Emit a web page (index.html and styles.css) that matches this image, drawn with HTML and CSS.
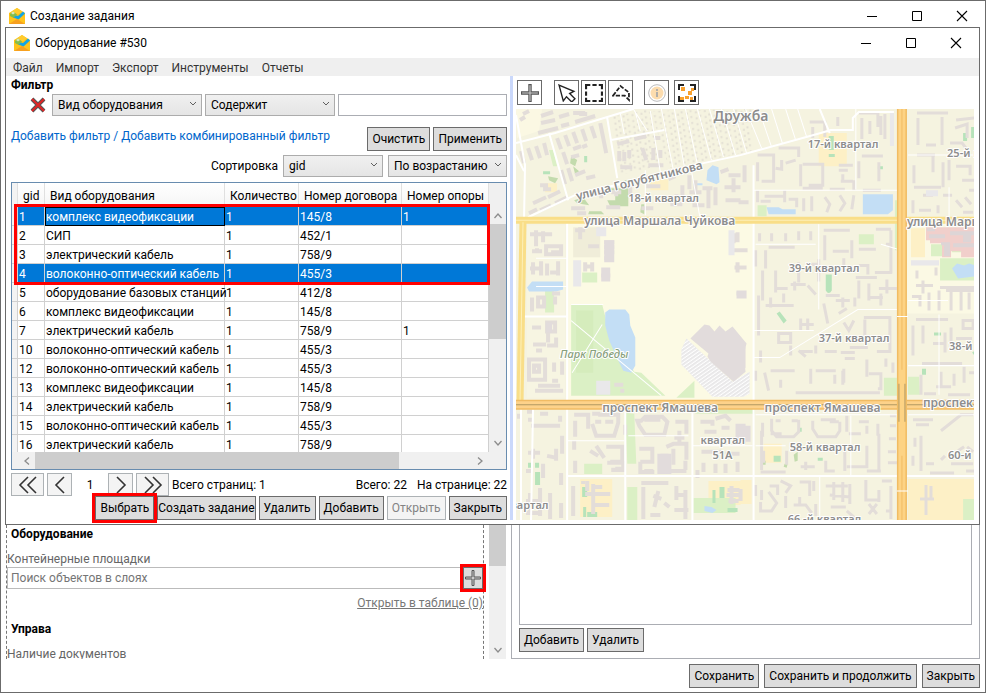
FILE: index.html
```html
<!DOCTYPE html>
<html lang="ru">
<head>
    <meta charset="UTF-8">
    <title>Создание задания</title>
    <link rel="stylesheet" href="styles.css">
</head>
<body>
    <svg width="0" height="0" class="defs" aria-hidden="true">
        <symbol id="logo" viewBox="0 0 16 16">
            <path d="M0 5 8 0l8 5v11H0z" fill="#fdc010"/>
            <path d="M3 3.500 8 0l5 3.500-4 3z" fill="#ffcb2e"/>
            <path d="M1 6l3-2.500 4 3L4.500 10 1 8z" fill="#84bd4c"/>
            <path d="M2 5l2-1.500L6 5 4 6.500z" fill="#d7e9bd"/>
            <path d="M0 8l8 4 8-5v9H0z" fill="#ffc41c"/>
            <path d="M4.500 9.500 7 7.500l2 .5 5-4.500 2 2L9.500 11.500z" fill="#12a5e4"/>
            <path d="M0 16l8-5 8 5z" fill="#f7a020"/>
        </symbol>
        <symbol id="chevron" viewBox="0 0 8 8"><path d="M1 2l3 3 3-3" fill="none" stroke="#606060"/></symbol>
        <symbol id="arrow" viewBox="0 0 10 10"><path d="M1.500 7 5 3l3.500 4" fill="none" stroke="#8c8c8c" stroke-width="1.300"/></symbol>
        <symbol id="plus" viewBox="0 0 16 16"><path d="M7 .5h2V7h6.500v2H9v6.500H7V9H.5V7H7z" fill="#ccc" stroke="#555" stroke-width="1"/></symbol>
        <symbol id="min" viewBox="0 0 12 12"><path d="M1 6.500h10" stroke="#000"/></symbol>
        <symbol id="max" viewBox="0 0 12 12"><path d="M1.500 1.500h9v9h-9z" fill="none" stroke="#000"/></symbol>
        <symbol id="close" viewBox="0 0 12 12"><path d="M1 1l10 10M11 1 1 11" stroke="#000" stroke-width="1.100"/></symbol>
    </svg>

    <div class="task-window">
        <header class="titlebar task-title">
            <svg class="logo"><use href="#logo"/></svg>
            <span>Создание задания</span>
            <div class="window-buttons">
                <button aria-label="Свернуть"><svg><use href="#min"/></svg></button>
                <button aria-label="Развернуть"><svg><use href="#max"/></svg></button>
                <button aria-label="Закрыть окно"><svg><use href="#close"/></svg></button>
            </div>
        </header>

        <div class="equipment-window">
            <header class="titlebar">
                <svg class="logo"><use href="#logo"/></svg>
                <span>Оборудование #530</span>
                <div class="window-buttons">
                    <button aria-label="Свернуть"><svg><use href="#min"/></svg></button>
                    <button aria-label="Развернуть"><svg><use href="#max"/></svg></button>
                    <button aria-label="Закрыть окно"><svg><use href="#close"/></svg></button>
                </div>
            </header>
            <nav class="menu">
                <a href="#">Файл</a>
                <a href="#">Импорт</a>
                <a href="#">Экспорт</a>
                <a href="#">Инструменты</a>
                <a href="#">Отчеты</a>
            </nav>

            <div class="panes">
                <section class="list-pane">
                    <h2 class="filter-title">Фильтр</h2>
                    <div class="filter-row">
                        <button class="remove" aria-label="Удалить фильтр">
                            <svg viewBox="0 0 16 16"><path d="M2 2l12 12M14 2 2 14" stroke="#555" stroke-width="4"/><path d="M2 2l12 12M14 2 2 14" stroke="#e02424" stroke-width="2"/></svg>
                        </button>
                        <span class="select field"><select aria-label="Поле"><option>Вид оборудования</option></select><svg><use href="#chevron"/></svg></span>
                        <span class="select cond"><select aria-label="Условие"><option>Содержит</option></select><svg><use href="#chevron"/></svg></span>
                        <input type="text" class="filter-value" aria-label="Значение">
                    </div>
                    <div class="filter-actions">
                        <div class="links"><a href="#">Добавить фильтр</a> <span>/</span> <a href="#">Добавить комбинированный фильтр</a></div>
                        <button class="btn">Очистить</button>
                        <button class="btn">Применить</button>
                    </div>
                    <div class="sort-row">
                        <label for="sort">Сортировка</label>
                        <span class="select sort-field"><select id="sort"><option>gid</option></select><svg><use href="#chevron"/></svg></span>
                        <span class="select sort-dir"><select aria-label="Порядок"><option>По возрастанию</option></select><svg><use href="#chevron"/></svg></span>
                    </div>

                    <div class="grid-box">
                        <div class="grid-body">
                            <table>
                                <colgroup><col class="c-mark"><col class="c-gid"><col><col class="c-count"><col class="c-contract"><col class="c-pole"></colgroup>
                                <thead>
                                    <tr><th></th><th>gid</th><th>Вид оборудования</th><th>Количество</th><th>Номер договора</th><th>Номер опоры</th></tr>
                                </thead>
                                <tbody>
                                    <tr class="selected"><td></td><td>1</td><td class="current">комплекс видеофиксации</td><td>1</td><td>145/8</td><td>1</td></tr>
                                    <tr><td></td><td>2</td><td>СИП</td><td>1</td><td>452/1</td><td></td></tr>
                                    <tr><td></td><td>3</td><td>электрический кабель</td><td>1</td><td>758/9</td><td></td></tr>
                                    <tr class="selected"><td></td><td>4</td><td>волоконно-оптический кабель</td><td>1</td><td>455/3</td><td></td></tr>
                                    <tr><td></td><td>5</td><td>оборудование базовых станций</td><td>1</td><td>412/8</td><td></td></tr>
                                    <tr><td></td><td>6</td><td>комплекс видеофиксации</td><td>1</td><td>145/8</td><td></td></tr>
                                    <tr><td></td><td>7</td><td>электрический кабель</td><td>1</td><td>758/9</td><td>1</td></tr>
                                    <tr><td></td><td>10</td><td>волоконно-оптический кабель</td><td>1</td><td>455/3</td><td></td></tr>
                                    <tr><td></td><td>12</td><td>волоконно-оптический кабель</td><td>1</td><td>455/3</td><td></td></tr>
                                    <tr><td></td><td>13</td><td>комплекс видеофиксации</td><td>1</td><td>145/8</td><td></td></tr>
                                    <tr><td></td><td>14</td><td>электрический кабель</td><td>1</td><td>758/9</td><td></td></tr>
                                    <tr><td></td><td>15</td><td>волоконно-оптический кабель</td><td>1</td><td>455/3</td><td></td></tr>
                                    <tr><td></td><td>16</td><td>электрический кабель</td><td>1</td><td>758/9</td><td></td></tr>
                                </tbody>
                            </table>
                            <div class="vscroll grid-vscroll">
                                <svg><use href="#arrow"/></svg>
                                <i class="thumb"></i>
                                <svg class="down"><use href="#arrow"/></svg>
                            </div>
                        </div>
                        <div class="hscroll">
                            <svg class="left"><use href="#arrow"/></svg>
                            <i class="thumb"></i>
                            <svg class="right"><use href="#arrow"/></svg>
                        </div>
                        <div class="mark"></div>
                    </div>

                    <div class="pager">
                        <button class="wide" aria-label="Первая"><svg viewBox="0 0 20 18"><path d="M10 1 2 9l8 8M18 1l-8 8 8 8"/></svg></button>
                        <button aria-label="Назад"><svg viewBox="0 0 20 18"><path d="M14 1 6 9l8 8"/></svg></button>
                        <span class="page">1</span>
                        <button aria-label="Вперед"><svg viewBox="0 0 20 18"><path d="M6 1l8 8-8 8"/></svg></button>
                        <button class="wide" aria-label="Последняя"><svg viewBox="0 0 20 18"><path d="M2 1l8 8-8 8M10 1l8 8-8 8"/></svg></button>
                        <span>Всего страниц: 1</span>
                        <span class="total">Всего: 22</span>
                        <span class="on-page">На странице: 22</span>
                    </div>
                    <div class="list-buttons">
                        <button class="btn choose">Выбрать</button>
                        <button class="btn create">Создать задание</button>
                        <button class="btn">Удалить</button>
                        <button class="btn">Добавить</button>
                        <button class="btn" disabled>Открыть</button>
                        <button class="btn">Закрыть</button>
                    </div>
                </section>

                <div class="splitter"></div>

                <section class="map-pane">
                    <div class="map-tools">
                        <button aria-label="Добавить объект"><svg><use href="#plus"/></svg></button>
                        <button class="gap-l" aria-label="Курсор"><svg viewBox="0 0 17 17"><path d="M1 1l14 6-4 2 5 5-3 3-5-5-3 4z" fill="#fff" stroke="#222" stroke-width="1.300"/></svg></button>
                        <button aria-label="Выделить рамкой"><svg viewBox="0 0 17 17"><path d="M1 5V1h4M7 1h4M13 1h3v4M16 7v4M16 13v3h-3M11 16H7M5 16H1v-3M1 11V7" fill="none" stroke="#222" stroke-width="2"/></svg></button>
                        <button aria-label="Выделить областью"><svg viewBox="0 0 17 17"><path d="M1 11 8 2l8 6v7l-4-4z" fill="none" stroke="#222" stroke-width="1.700" stroke-dasharray="4 1.500"/></svg></button>
                        <button class="gap-m" aria-label="Информация"><svg viewBox="0 0 18 18"><circle cx="9" cy="9" r="8.300" fill="#fff" stroke="#bbb"/><circle cx="9" cy="9" r="6.500" fill="#fcdcae"/><path d="M9 5v2M9 8v5" stroke="#aaa" stroke-width="1.800"/></svg></button>
                        <button class="gap-s" aria-label="Показать все"><svg viewBox="0 0 18 18"><path d="M1 6V1h5M12 1h5v5M17 12v5h-5M6 17H1v-5" fill="none" stroke="#222" stroke-width="2"/><path d="M3 3h4v4H3zM13 4h3v3h-3zM10 7h4v4h-4zM7 12h4v3H7zM12 13h3v3h-3zM2 13h4v3H2z" fill="#f9a12e"/></svg></button>
                    </div>
                    <svg class="map" viewBox="516 109 458 410" preserveAspectRatio="xMinYMin slice">
                        <defs>
                            <pattern id="hatch" width="3" height="3" patternUnits="userSpaceOnUse" patternTransform="rotate(-35)"><path d="M0 1h3" stroke="#fff"/></pattern>
                            <pattern id="houses" width="9" height="6" patternUnits="userSpaceOnUse" patternTransform="rotate(-8)"><path d="M1 1h2v2H1zM6 3h2v2H6z" fill="#e3dfd4"/></pattern>
                        </defs>
                        <path d="M516 109h458v410H516z" fill="#f5f3e0"/>
                        <!-- пустые кварталы -->
                        <path d="M567 223h186v177H567z" fill="#fcfae4"/>
                        <path d="M527 225h38v172h-38z" fill="#f7f5e2"/>
                        <path d="M573 227h27v30h-27z" fill="#f0edd9"/>
                        <path d="M516 109h26l-3 22-22 7z" fill="#fbf8e3"/>
                        <path d="M906 223h68v90h-68z" fill="#fbf9e4"/>
                        <path class="yellow" d="M650 179h18v11h-18zM818 133h28v33h-28zM910 228h14v29h-14zM580 478h32v38h-32zM708 480h32v24h-32zM763 443h18v19h-18zM907 478h68v42h-68zM740 479h11v24h-11zM545 183h12v9h-12z"/>
                        <path class="grass" d="M571 304h31l8 32 24 35 7 1 24 23h-94zM676 397l18-17v17zM625 412l9 1 2 50h-9zM627 486h10v33h-10zM584 463h18v10h-18zM883 377h13v18h-13zM907 376h11l1 18h-12zM939 258h35v22h-35zM858 234h15v10h-15zM757 205h9v11h-9zM693 497h42v15h-42zM894 200h4v50h-4zM962 498h12v21h-12zM930 244h12v12h-12zM951 242h14v10h-14zM582 272h15v10h-15zM545 290h9v22h-9zM549 150l4 16h4l-4-16zM695 408h59v5h-59z"/>
                        <path d="M576 310h17v62h-17z" fill="#cfe8b4" opacity=".5"/>
                        <path class="wood" d="M607 188h18l3-5-4-3h4v26h-18l-3-6h8v-9zM574 200l9-3 6 8-12-2zM589 211h12l3 3h-16zM640 212l4 2v-10h-3zM548 176l10 2-3 5-6-3zM571 156l6 4-2 6-5-3zM573 166l6 5-4 3zM793 454l4-3v9l-3 1zM784 463h3l-1 4-3-1zM762 460h3v4h-3z"/>
                        <path class="tree" d="M543 171h7v3h-7zM584 156h3v6h-3zM828 136h5v14h-5zM828 154h6v3h-6zM825 274h6v16q-3 5-6 0zM877 166h5v3h-5zM970 127h4v11h-4zM962 133h4v8h-4zM535 471h5v13h-5zM528 462h3v5h-3zM535 462h4v5h-4zM582 486h5v10h-5zM587 511h10v5h-10zM583 506h3v10h-3zM719 486h5v11h-5zM712 489h3v13h-3zM727 507h10v4h-10zM773 455h7v6h-7zM817 457h5v3h-5zM798 427h3v4h-3zM776 313l3-2 7 9-3 3zM921 368h4v6h-4zM933 332h7v3h-7zM971 352l3-2v6z"/>
                        <path d="M925 227h49v30h-14v-6h-10v6h-9v-14h-12v-3h-4z" fill="#f1cfcb"/>
                        <path d="M928 234h16v4h-16zM940 242h9v14h-6v-11h-3zM949 231h25v4h-25zM952 243h22v4h-22zM962 235h8v7h-8zM926 228h8v3h-8z" fill="#ddd5d6"/>
                        <path class="water" d="M605 312l4-3h16l4 5 1 11 5 12v28l-4 7-8-2-6-12-8-18-4-15zM532 281h31v8l-7 2h-27l-2-4zM707 170l5-5 6 2 1 15-3 2-10-4zM693 183h9v2h-9zM862 194h30v16l-5 4h-25zM766 207h12l4 2h13v5h-27zM951 268l5-5 7 2 5-2 6 2v11l-9 1-8 1zM704 505l7 1 5 3-4 3-8-2z"/>

                        <!-- стадион -->
                        <path d="M681 349l5-11 46 43 17-10v22l-6 3h-31l-31-32z" fill="#e9e8e9"/>
                        <path d="M681 349l5-11 46 43 17-10v22l-6 3h-31l-31-32z" fill="url(#hatch)"/>
                        <path d="M690 338l14-14 5 1 5 6 5-6 6 6 7-5 14 17-3 11 2 17-12 10-23-20-3-5 1-3z" fill="#e2dcdc"/>

                        <path d="M650 111l102-2-1 42-82 17zM611 117l38-8 12 56-42 10z" fill="url(#houses)"/>
                        <!-- здания -->
                        <g class="houses-s">
                            <path d="M520 120l5-3M523 114l6-3M541 116l12-4M541 123l14-3M538 133l20-5M559 117l10-3M561 126l8-2M573 113h12M575 122l20-6M579 114h8M521 151l3 12M528 148l4 12M536 146l4 12M544 143l3 12M557 138l4 11M565 135l4 11M573 132l4 11M582 129l4 12M591 126l4 12M563 152l4 12M571 157l8-2M573 149l8-3M582 147l5-2M600 123l6 30M561 170l4 14M568 168l4 13M575 175l10-4M586 178l9-2M533 203l13-6M548 197l12-6M555 203l12-6M540 210l11-5M540 185h8M543 189h8M571 208h14M577 213h9M529 213l8-4"/>
                            <path d="M617 144l12-3M634 139l12-3M654 138h6M619 151v10M624 152v9M629 150v8M620 167h12M648 165h15M653 148v12M660 150v8M642 148l4 12M646 186h14M668 179l7-3M676 172l6-2M682 185v12M689 175v14M695 180v11M670 204h12M692 205h12M689 192h12M676 194v12M702 188h10M708 190v18M715 187v18M724 187h16M720 172l8-3M728 175h12M733 178v14M725 200h15M744 165v17M738 202h10M641 208h12M606 207h14M594 193h12M601 189v9M611 192h10M616 188v8M630 186v11M640 177h8"/>
                            <path d="M530 234h22M536 230v16M543 231v11M532 251h10M551 252h12M537 248v5M546 246h15v8h-15zM533 262v12M541 261v14M530 268h12M547 263v12M558 261v14M550 272h10M575 230h10M580 227v12M588 246h11M585 262v9M592 262v9M584 266h9M604 242h10M604 247h10M604 252h10M604 258h9M601 275h9"/>
                            <path d="M733 233v10M737 232v10M734 267h12M737 262v10M736 293h9M733 250h14"/>
                            <path d="M532 297v14M538 297h6v9h-6zM552 293h8M555 296v8M532 327h9M547 322h8v9h-8zM533 344h13M536 350h6M547 345h11M529 359h16v20h-16zM534 365h5v6h-5zM554 362v9M562 361v13M552 380h6M538 385h22M535 390h28M548 327v15M556 337v6M599 384h10M614 384h9M598 391h12M620 390h4"/>
                            <path d="M527 411h6M530 417v4M540 413h8M560 415v6M519 413v5M531 425h29M562 435v18M556 448v12M528 452h12M533 448v10M526 470h6M543 463v14M561 472v12M530 492v22M540 487v28M550 492v26M561 502v15M526 500h12M526 512h12M547 455l10 2"/>
                            <path d="M574 414h14v14M575 420v16M592 413h8M598 414h20v8l-4 13h-18l-4-12M595 421h6M605 421h8M625 424v10M574 440v9M590 450l8 5M596 445l8 12M606 446h16v15h-12M575 460v12M587 480v10M573 485v30M607 462h16v7h-12M615 468h8"/>
                            <path d="M637 420h4l4-4h17l5 5-3 13h-19l-6-9zM644 419h16M675 421h11v12M679 430v12M674 437h10M639 448h13v13h-12M640 461v10h14M644 470h9M673 448v16M666 446l7-3h13v16M685 460v9M667 470h19M660 455h8M641 482h27M643 486v32M653 495l8 3M658 490l-4 16M664 502l5 4M676 485v14M685 489v29M674 509h14M676 494h10M650 514h10"/>
                            <path d="M715 418l10-3 5 5M700 421h12v4M704 431h12M721 427h8M701 451h20M725 453h14M703 462v9M715 463v9M725 463v9M737 461v10M697 469v8M727 489h12M731 485v18M726 494h16M728 500h10M740 488v12"/>
                            <path d="M593 483v30M585 493h18M594 486h8M594 493h16M593 504h16M583 480v3"/>
                        </g>
                        <g class="houses-l">
                            <path d="M809 122h15v15M812 127v11M837 117v9M858 113h19v14M861 118v21M869 121v13M884 114v25M880 116v19M861 143h16M781 160v9l-6-1M785 163l10-3M778 148h20v9M757 155h16v26h-12M757 162v19M802 164h20v21h-14M800 164v22M838 165h14M838 170h9M842 174v7M861 156h21M858 161v17M878 162v19M840 181h12M802 188h20M829 189h15M862 190h18M757 190v12M764 196h19M784 190v12M760 201h10M803 198v13M811 196v15M824 197l5 7-3 8M839 195l5 8-5 8M853 195l-2 14M788 199h8v8M853 180v10"/>
                            <path d="M916 113h31M917 118v27M941 117v28M925 145h10M955 120l18-2M954 128l12-4v14M949 143h12l4 5M913 165v18M916 155h18M932 156v16M942 162v25M913 187h27M955 166h14v9M948 160v20M961 180h12M912 200v13M918 210h12M922 195h10M942 195h9M937 205v8M955 200l6 7M964 197l6 7M968 190h6M962 212h10"/>
                            <path d="M759 233v8M771 233v8M785 233v8M798 231v9M810 231v9M823 230h26M824 235v25M832 251h16M851 240v18M858 249h17M890 230v43M875 229h15M885 244h5M874 272h17M755 250v16M768 247h26M765 250v18M762 270v30M775 270v22M798 262v20M808 264h7v7M818 259v22M828 270h8M790 284h15M794 281v9M807 285l8 9M825 295h14M858 265h9v9M855 277h21M858 280v18M868 283v17M878 288h18M886 279v14M775 288h12M843 258v8"/>
                            <path d="M758 295v40M765 305h28M770 297v10M783 293v9M800 318v12M807 318v12M799 324h14M823 303l4 20M835 300h14M842 297v10M854 297v9M868 297h14M880 293v12M778 333h12v9h-12zM838 313l8-5M843 322l5 8 5-10M863 317h26v34h-13M864 319v20M849 347h18M798 350l7 6M790 345v10M815 345v8M840 352h14M844 358h10M760 350v12M798 351h14M824 351h12M770 370h24M810 368v15M815 370h20M842 370v14M834 374v9M843 368v14M866 359v17M868 373h12v15h-3M795 392h84M780 379v8M764 372l4 18M755 370v10M885 358v8M892 362v10"/>
                            <path d="M915 319h32M912 325v30M922 325v18M944 332v20M932 343h12M950 327v19M955 338h16M962 320h10v8h-10zM921 363h40M920 374v20M940 371v15M963 366v16M968 372h6M935 386h15M947 394h22M953 373v12M923 393h12"/>
                            <path d="M912 419h20M915 424h13M940 430l20-16h12M920 435v35M929 472h24M925 463h8M944 455l-4 4M957 450l6-4M966 446l6 5M950 463h22M914 437v9M912 455v10M965 470h8"/>
                            <path d="M771 418v12l5 6h17l5-5v-12M762 422v14M775 420h5M791 420h6M812 420v8l5 8h18l4-6v-9M820 419h15M846 415v16M848 433h12M858 421h10M877 423v12M866 425v8M761 430v39M760 471h25M770 433h11M786 450v14M763 450v12M800 466h14M805 461v8M825 460v10h9M844 450v20M846 466h20v-21M866 470h14M878 433v37M889 415h6M889 425h6M888 438h7M887 451h8M887 462h9M829 421h9"/>
                            <path d="M755 484v11M761 489v10M769 485h8v9M780 480l10 5-5 7M785 495v12M799 481h10v14M813 480v10M768 491l8 11-5 8h-11v-9M793 504h12l6 8M799 496v9M825 485h22M833 481v18M842 481v20M849 483v20M829 494l20 2M865 479v20h13M878 489v12M881 480h10M890 485v33M868 503l8 10M876 503l-8 10M885 510h5M830 506h15M846 510l8 7M815 503v12M925 484v30M919 498h14M930 485v14"/>
                            <path d="M911 296h8v10M928 292v18M938 290v20M950 290v20M960 290v20M945 290h28M968 292v17M916 270v8M935 267v8M915 285h17M922 280v13M939 287h35"/>
                        </g>
                        <path d="M657 453h14v20h-14zM604 240h10v22h-10zM601 267h9v14h-9zM735 423h10v20h-10zM736 290h10v8h-10zM740 340l5 7v20l-5 5zM740 425h10v16h-10zM546 322h6v10h-6z" fill="#e2dcdc"/>
                        <path d="M573 260h8v26h-8zM596 227h10v9h-10zM728 230h6v25h-6zM596 380h14v14h-14zM889 111h4v35h-4zM925 190h12v6h-12zM910 260h28v5h-28z" fill="#e9e8ea"/>

                        <!-- улицы -->
                        <g class="street">
                            <path d="M516 143l39-10 78-24M516 115l9 50-1 55M528 217l49-23 59-14 67-17 37-8 80-22 10-3h22v-12l6-6h35M549 133l19 67M607 118l10 60M611 140l53-10M567 223v296M753 165v354M567 475h407M625 408v111M692 408v111M524 316h43M521 408v111M819 109l10 24M516 155l8 16M533 407l-2 112"/>
                        </g>
                        <g class="street thin">
                            <path d="M620 113l4 21M635 112l5 19M633 109l14 22M650 111l10 61M661 109l12 61M674 109l10 58M685 109l12 55M697 109l14 51M709 109l14 48M721 109l14 46M733 109l13 44M745 109l16 39M758 109l13 38M771 109l11 35M785 109l10 31M797 109l9 28"/>
                            <path d="M753 357h26l78-48h42M692 445h60M819 475v44M692 475v44M536 258h31M536 286h31M628 435h60M567 440h57M753 190h144M755 244h60M818 224v85M880 244l17 5M855 109v80M907 155h67M948 187v32M907 300h40M907 365h67M938 314v80M755 414h142M907 414h67M755 445h30M690 165l10 55M645 170v45M753 330h60M850 415v60M571 304h32M571 320l90 75M602 324l-30 48"/>
                        </g>

                        <!-- проспекты -->
                        <path d="M523 220l-3 184" class="yellow-road"/>
                        <path d="M516 220h458" class="yellow-road"/>
                        <path d="M523 222l-3 180M516 220h458" fill="none" stroke="#fdf0b8" stroke-width="1"/>
                        <path d="M516 404h458" stroke="#f1bb63" stroke-width="10"/>
                        <path d="M516 404h458" stroke="#fdd28a" stroke-width="7"/>
                        <path d="M516 404h458" stroke="#b09862" stroke-width="1"/>
                        <path d="M901 109v410" stroke="#f1bc63" stroke-width="10"/>
                        <path d="M901 109v410" stroke="#fdd384" stroke-width="7"/>
                        <path d="M901 109v260M901 455v64" stroke="#f1bc63" stroke-width="1"/>
                        <path d="M898 383v38M904 383v38" stroke="#b09862" stroke-width="1"/>
                        <path d="M896 316h11M896 490h11" stroke="#fff" stroke-width="1"/>

                        <!-- подписи -->
                        <g class="labels">
                            <text x="713" y="121" class="town">Дружба</text>
                            <text x="577" y="200" class="road" transform="rotate(-14 577 200)">улица Голубятникова</text>
                            <text x="584" y="225" class="road">улица Маршала Чуйкова</text>
                            <text x="906" y="226" class="road">улица Маршала Чуйкова</text>
                            <text x="602" y="411" class="road">проспект Ямашева</text>
                            <text x="764" y="411" class="road">проспект Ямашева</text>
                            <text x="922" y="406" class="road">проспект Ямашева</text>
                            <text x="628" y="202">18-й квартал</text>
                            <text x="807" y="148">17-й квартал</text>
                            <text x="946" y="157">25-й квартал</text>
                            <text x="788" y="272">39-й квартал</text>
                            <text x="818" y="341">37-й квартал</text>
                            <text x="948" y="349">38-й квартал</text>
                            <text x="789" y="450">58-й квартал</text>
                            <text x="947" y="458">60-й квартал</text>
                            <text x="787" y="522">66 -й квартал</text>
                            <text x="504" y="508">квартал</text>
                            <text x="700" y="443">квартал</text>
                            <text x="712" y="458">51А</text>
                            <text x="560" y="357" class="park">Парк Победы</text>
                        </g>
                    </svg>
                </section>
            </div>
        </div>

        <div class="task-body">
            <form class="task-form">
                <h3>Оборудование</h3>
                <label for="layers">Контейнерные площадки</label>
                <div class="search">
                    <input type="text" id="layers" placeholder="Поиск объектов в слоях">
                    <button type="button" aria-label="Добавить из таблицы"><svg><use href="#plus"/></svg></button>
                </div>
                <a href="#">Открыть в таблице (0)</a>
                <h3>Управа</h3>
                <p>Наличие документов</p>
            </form>
            <div class="vscroll form-vscroll">
                <i class="thumb"></i>
                <svg class="down"><use href="#arrow"/></svg>
            </div>
            <section class="files">
                <div class="file-list"></div>
                <div class="file-buttons">
                    <button class="btn">Добавить</button>
                    <button class="btn">Удалить</button>
                </div>
            </section>
        </div>
        <footer class="task-footer">
            <button class="btn">Сохранить</button>
            <button class="btn">Сохранить и продолжить</button>
            <button class="btn">Закрыть</button>
        </footer>
    </div>
</body>
</html>
```
FILE: styles.css
```css
* {
    box-sizing: border-box;
}
body {
    margin: 0;
    font-family: Roboto, "Noto Sans", sans-serif;
    font-size: 12px;
    line-height: 16px;
    color: #000;
    background: #fff;
}
button, input, select {
    font: inherit;
    color: inherit;
    margin: 0;
}
h2, h3, p {
    margin: 0;
    font-size: 12px;
}
svg {
    display: block;
    flex: none;
}
.defs {
    position: absolute;
}

/* windows */
.task-window {
    min-height: 100vh;
    border: 1px solid #6b6b6b;
}
.titlebar {
    display: flex;
    align-items: center;
    height: 30px;
    padding: 0 9px 0 8px;
}
.task-title {
    height: 26px;
    padding-top: 3px;
}
.logo {
    width: 16px;
    height: 16px;
    margin-right: 5px;
}
.window-buttons {
    display: flex;
    gap: 17px;
    margin-left: auto;
}
.window-buttons button {
    padding: 8px;
    border: 0;
    background: none;
}
.window-buttons svg {
    width: 12px;
    height: 12px;
}
.equipment-window {
    margin: 0 5px 0 4px;
    padding-bottom: 5px;
    border: 1px solid #6b6b6b;
}
.menu {
    display: flex;
    gap: 13px;
    height: 18px;
    padding: 2px 7px 0;
    background: #efefef;
}
.menu a {
    color: #333;
    text-decoration: none;
}
.panes {
    display: grid;
    grid-template-columns: 504px 3px 1fr;
    height: 443px;
}
.splitter {
    background: #cad8fb;
}

/* common controls */
.btn {
    height: 24px;
    padding: 0 4px;
    border: 1px solid #6b6b6b;
    background: #ddd;
    white-space: nowrap;
}
.btn:disabled {
    color: #838383;
    border-color: #adb2b5;
    background: #f4f4f4;
}
.select {
    position: relative;
    height: 22px;
}
.select select {
    display: block;
    appearance: none;
    width: 100%;
    height: 22px;
    padding: 0 5px;
    border: 1px solid #acacac;
    border-radius: 0;
    background: linear-gradient(#f0f0f0, #e5e5e5);
}
.select svg {
    position: absolute;
    right: 5px;
    top: 6px;
    width: 8px;
    height: 8px;
    pointer-events: none;
}
.vscroll {
    display: flex;
    flex-direction: column;
    align-items: center;
    width: 17px;
    background: #f0f0f0;
}
.vscroll svg, .hscroll svg {
    width: 10px;
    height: 10px;
}
.vscroll .thumb {
    width: 17px;
    background: #cdcdcd;
}
.down {
    margin-top: auto;
    transform: rotate(180deg);
}
.left {
    transform: rotate(-90deg);
}
.right {
    margin-left: auto;
    transform: rotate(90deg);
}

/* list */
.list-pane {
    padding: 1px 3px 0 5px;
}
.filter-title {
    height: 17px;
}
.filter-row {
    display: flex;
    gap: 3px;
    height: 22px;
    padding-left: 18px;
}
.remove {
    width: 20px;
    padding: 0 1px;
    border: 0;
    background: none;
}
.remove svg {
    width: 16px;
    height: 16px;
}
.field {
    width: 150px;
}
.cond {
    width: 130px;
}
.filter-value {
    flex: 1;
    min-width: 0;
    border: 1px solid #abadb3;
}
.filter-actions {
    display: flex;
    gap: 3px;
    margin-top: 11px;
}
.links {
    flex: 1;
    padding-top: 1px;
    white-space: nowrap;
    color: #0066cc;
}
.links a {
    color: #0066cc;
    text-decoration: none;
}
.sort-row {
    display: flex;
    justify-content: flex-end;
    align-items: center;
    gap: 5px;
    margin-top: 4px;
}
.sort-field {
    width: 100px;
}
.sort-dir {
    width: 119px;
}

.grid-box {
    position: relative;
    margin-top: 5px;
    border: 1px solid #688caf;
    background: #f0f0f0;
}
.grid-body {
    display: flex;
    height: 269px;
    overflow: hidden;
}
table {
    flex: 1;
    width: 477px;
    table-layout: fixed;
    border-collapse: separate;
    border-spacing: 0;
}
.c-mark {
    width: 6px;
}
.c-gid {
    width: 27px;
}
.c-count {
    width: 74px;
}
.c-contract {
    width: 103px;
}
.c-pole {
    width: 87px;
}
th {
    height: 24px;
    padding: 2px 0 0 5px;
    border-right: 1px solid #e0e0e0;
    background: linear-gradient(#fff, #f5f5f5);
    font-weight: normal;
    text-align: left;
    white-space: nowrap;
}
td {
    height: 19px;
    padding: 2px 0 0 1px;
    border-right: 1px solid #d0d0d0;
    border-bottom: 1px solid #d0d0d0;
    background: #fff;
    white-space: nowrap;
}
th:first-child, td:first-child {
    padding: 0;
    background: #f3f3f3;
}
.selected td:not(:first-child) {
    background: #0078d7;
    color: #fff;
}
.current {
    outline: 1px solid #000;
    outline-offset: -1px;
}
.grid-vscroll {
    padding: 28px 0 4px;
}
.grid-vscroll .thumb {
    height: 115px;
    margin-top: 3px;
}
.hscroll {
    display: flex;
    align-items: center;
    height: 17px;
    padding: 0 21px 0 10px;
}
.hscroll .thumb {
    width: 364px;
    height: 17px;
    margin-left: 3px;
    background: #cdcdcd;
}
/* red frame over the first four rows */
.mark {
    position: absolute;
    left: 2px;
    top: 21px;
    width: 476px;
    height: 81px;
    border: 3px solid #f00;
}

.pager {
    display: flex;
    align-items: center;
    gap: 3px;
    margin-top: 3px;
}
.pager button {
    display: flex;
    align-items: center;
    justify-content: center;
    width: 25px;
    height: 23px;
    padding: 0;
    border: 1px solid #adb2b5;
    background: #f4f4f4;
}
.pager .wide {
    width: 33px;
}
.pager svg {
    width: 20px;
    height: 18px;
    fill: none;
    stroke: #333;
    stroke-width: 1.6;
}
.page {
    width: 30px;
    text-align: center;
}
.total {
    margin-left: auto;
}
.on-page {
    margin-left: 7px;
}
.list-buttons {
    display: flex;
    justify-content: flex-end;
    gap: 3px;
}
.create {
    padding: 0;
}
.choose {
    outline: 3px solid #f00;
    z-index: 1;
}

/* map */
.map-pane {
    display: flex;
    flex-direction: column;
    min-width: 0;
    padding: 4px 5px 0 3px;
}
.map-tools {
    display: flex;
    gap: 2px;
    padding: 0 1px 4px;
}
.map-tools button {
    display: flex;
    align-items: center;
    justify-content: center;
    width: 25px;
    height: 25px;
    padding: 0;
    border: 1px solid #6b6b6b;
    background: #fff;
}
.map-tools svg {
    width: 18px;
    height: 18px;
}
.map-tools .gap-l {
    margin-left: 10px;
}
.map-tools .gap-m {
    margin-left: 9px;
}
.map-tools .gap-s {
    margin-left: 3px;
}
.map {
    flex: 1;
    width: 100%;
    min-height: 0;
}
.yellow {
    fill: #fdf0c6;
}
.grass {
    fill: #dbf0c5;
}
.wood {
    fill: #c3dbad;
}
.tree {
    fill: #b7e3ba;
}
.water {
    fill: #c3def5;
}
.houses-s, .houses-l {
    fill: none;
    stroke: #e3ddd9;
    stroke-width: 4;
}
.houses-l {
    stroke-width: 3;
}
.street {
    fill: none;
    stroke: #fff;
    stroke-width: 2;
}
.thin {
    stroke-width: 1;
}
.yellow-road {
    fill: none;
    stroke: #f9de88;
    stroke-width: 7;
}
.labels {
    font-family: "Noto Sans", sans-serif;
    font-size: 11px;
    font-weight: 600;
    fill: #8d8d8d;
    stroke: #fff;
    stroke-width: 2px;
    stroke-linejoin: round;
    paint-order: stroke;
}
.town {
    font-size: 14px;
}
.road {
    font-size: 12px;
}
.park {
    font-style: italic;
    font-weight: 500;
    fill: #88a07c;
}

/* task form under the window */
.task-body {
    display: flex;
    height: 134px;
    padding: 0 5px;
}
.task-form {
    display: flex;
    flex-direction: column;
    width: 478px;
    border: 1px dashed #777;
    border-width: 0 1px;
    overflow-x: visible;
    overflow-y: clip;
}
.task-form h3 {
    padding: 1px 4px 9px;
}
.task-form label, .task-form p {
    color: #666;
}
.search {
    display: flex;
    height: 22px;
    flex: none;
}
.search input {
    flex: 1;
    padding: 0 3px;
    border: 1px solid #bbb;
}
.search input::placeholder {
    color: #757575;
}
.search button {
    width: 20px;
    padding: 0 1px;
    border: 1px solid #6b6b6b;
    background: #ddd;
    outline: 3px solid #f00;
}
.search svg {
    width: 16px;
    height: 16px;
}
.task-form a {
    align-self: flex-end;
    margin: 6px 0 9px;
    color: #777;
}
.form-vscroll {
    margin-left: 5px;
    padding-bottom: 4px;
}
.form-vscroll .thumb {
    height: 41px;
}
.files {
    flex: 1;
    display: flex;
    flex-direction: column;
    margin-left: 5px;
    padding: 0 7px;
    border: 1px solid #abadb3;
    border-top: 0;
}
.file-list {
    height: 100px;
    border: 1px solid #abadb3;
    border-top: 0;
}
.file-buttons {
    display: flex;
    gap: 3px;
    margin-top: 3px;
}
.task-footer {
    display: flex;
    justify-content: flex-end;
    gap: 5px;
    padding: 5px 5px 4px;
}
```
